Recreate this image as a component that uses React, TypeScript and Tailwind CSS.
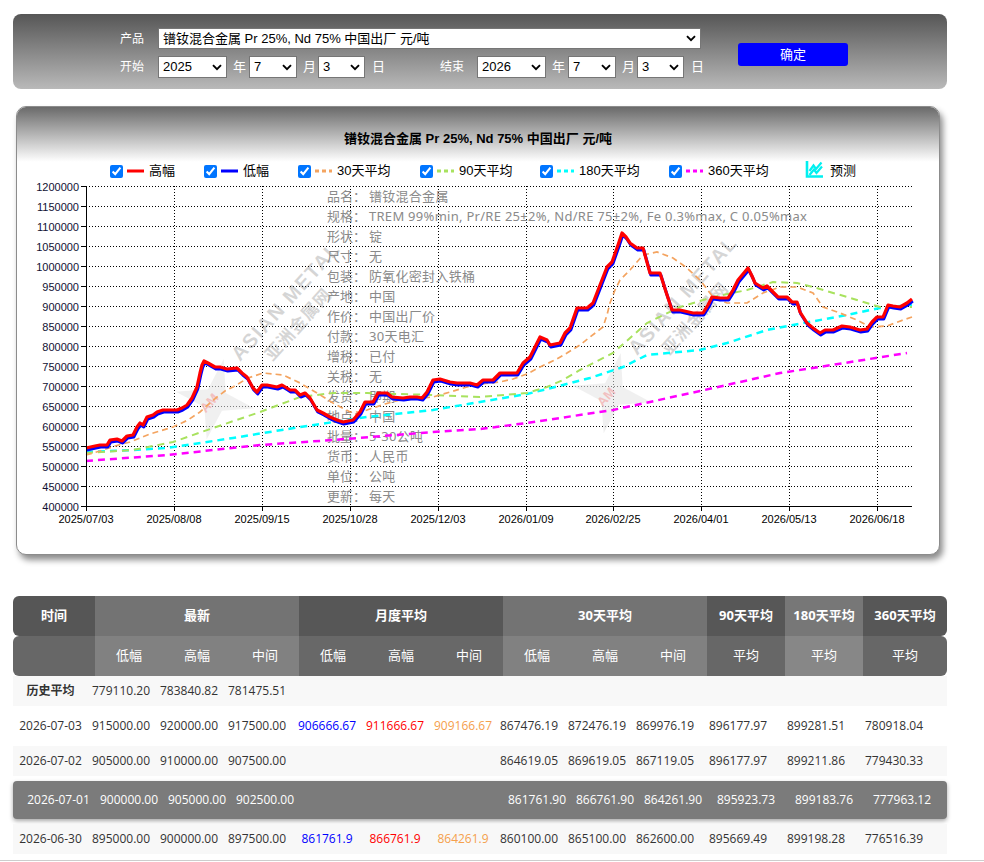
import React from "react";

const HIGH =
  "86,448 95,446 100,445 107,445 110,440 117,439 122,441 127,436 133,435 137,427 140,423 143,425 147,417 153,415 157,412 163,410 177,410 182,408 187,405 192,398 197,387 200,373 202,365 204,361 208,363 215,367 220,367 227,369 237,368 242,373 247,377 253,388 257,392 262,385 267,385 277,387 282,385 287,388 290,390 295,390 300,395 305,393 310,398 317,410 323,413 330,417 337,420 343,422 353,420 360,412 365,402 373,402 378,393 387,393 392,397 403,398 410,397 417,397 422,398 427,392 433,380 440,379 450,382 457,383 470,383 477,385 483,380 493,380 500,373 517,373 523,363 530,357 540,337 547,340 550,345 560,343 565,333 570,328 577,308 587,308 593,303 600,285 607,267 612,262 618,245 622,233 626,237 630,243 637,248 643,248 650,273 660,273 666,292 672,310 680,310 693,313 703,313 708,305 712,297 720,298 728,298 733,290 738,280 748,268 752,276 755,283 763,288 767,286 778,297 787,297 792,302 797,302 800,312 807,323 813,328 820,333 825,330 833,330 842,326 850,327 860,330 867,329 872,322 877,317 883,317 888,305 893,306 900,307 907,303 912,299";

const MA30 =
  "86,455 100,451 115,446 130,442 150,434 173,427 188,420 200,412 210,403 217,397 225,391 233,387 248,378 263,373 283,375 300,383 317,393 333,403 350,412 360,412 367,410 385,404 400,400 433,397 450,392 467,387 480,384 500,382 513,379 527,374 540,367 555,360 567,353 580,345 590,337 603,327 607,315 610,303 615,290 620,280 630,270 643,255 657,252 673,258 687,268 700,280 713,297 727,303 747,303 763,293 780,287 797,287 813,293 823,307 840,313 857,320 870,327 887,326 903,320 912,317";

const MA90 =
  "86,453 133,450 173,442 213,428 260,412 300,397 333,393 367,393 433,395 480,397 527,393 547,387 563,380 580,370 613,353 647,323 680,307 713,297 747,290 773,282 797,283 813,287 847,297 880,307 912,307";

const MA180 =
  "86,452 133,450 167,448 233,438 300,427 367,417 433,410 480,402 527,394 563,385 590,378 623,367 647,355 700,350 727,343 767,330 793,325 847,315 880,308 912,305";

const MA360 =
  "86,461 167,455 260,445 333,440 433,432 480,429 527,423 613,410 700,391 780,373 813,368 907,353";

const Y_LABELS = Array.from({ length: 17 }, (_, i) => ({
  v: String(1200000 - i * 50000),
  y: 186 + i * 20,
}));

const X_LABELS: [string, number][] = [
  ["2025/07/03", 86],
  ["2025/08/08", 174],
  ["2025/09/15", 262],
  ["2025/10/28", 350],
  ["2025/12/03", 438],
  ["2026/01/09", 526],
  ["2026/02/25", 613],
  ["2026/04/01", 701],
  ["2026/05/13", 789],
  ["2026/06/18", 877],
];

const INFO: [string, string][] = [
  ["品名：", "镨钕混合金属"],
  ["规格：", "TREM 99%min, Pr/RE 25±2%, Nd/RE 75±2%, Fe 0.3%max, C 0.05%max"],
  ["形状：", "锭"],
  ["尺寸：", "无"],
  ["包装：", "防氧化密封入铁桶"],
  ["产地：", "中国"],
  ["作价：", "中国出厂价"],
  ["付款：", "30天电汇"],
  ["增税：", "已付"],
  ["关税：", "无"],
  ["发货：", "即期"],
  ["地点：", "中国"],
  ["批量：", "5-30公吨"],
  ["货币：", "人民币"],
  ["单位：", "公吨"],
  ["更新：", "每天"],
];

function Chevron() {
  return (
    <svg width="10" height="7" viewBox="0 0 10 7" className="shrink-0">
      <path d="M1 1.2 L5 5.2 L9 1.2" fill="none" stroke="#000" strokeWidth="1.9" />
    </svg>
  );
}

function Sel({ className, text }: { className: string; text: string }) {
  return (
    <div
      className={
        "flex items-center justify-between bg-white border border-[#767676] pl-[4px] pr-[4px] text-[13px] text-black whitespace-nowrap " +
        className
      }
    >
      <span>{text}</span>
      <Chevron />
    </div>
  );
}

function Watermark({ dx, dy }: { dx: number; dy: number }) {
  return (
    <g transform={`translate(${dx},${dy})`}>
      <g transform="translate(215,400) rotate(12)" opacity="0.55">
        <polygon
          points="0,-42 9,-9 40,0 9,9 0,40 -9,9 -40,0 -9,-9"
          fill="#e4e4e4"
        />
      </g>
      <text
        x="198"
        y="408"
        transform="rotate(-48 208 402)"
        fontFamily="Liberation Sans, Arial, sans-serif"
        fontWeight="bold"
        fontSize="13"
        fill="#f3b5b5"
        opacity="0.8"
      >
        AM
      </text>
      <g transform="translate(240,362) rotate(-48)" opacity="0.16">
        <text
          x="0"
          y="0"
          fontFamily="Liberation Sans, Arial, sans-serif"
          fontWeight="bold"
          fontSize="20"
          letterSpacing="1.5"
          fill="#000"
        >
          ASIAN METAL
        </text>
        <text
          x="22"
          y="24"
          fontFamily="Noto Sans CJK SC, sans-serif"
          fontWeight="bold"
          fontSize="17"
          letterSpacing="1"
          fill="#000"
        >
          亚洲金属网
        </text>
      </g>
    </g>
  );
}

function Chart() {
  return (
    <svg
      width="922"
      height="374"
      viewBox="17 180 922 374"
      className="block"
    >
      {Y_LABELS.slice(0, 16).map((l) => (
        <line
          key={"h" + l.y}
          x1="86"
          x2="912"
          y1={l.y + 0.5}
          y2={l.y + 0.5}
          stroke="#000"
          strokeWidth="1"
          strokeDasharray="1 2"
          shapeRendering="crispEdges"
        />
      ))}
      {X_LABELS.slice(1).map(([, x]) => (
        <line
          key={"v" + x}
          x1={x + 0.5}
          x2={x + 0.5}
          y1="186"
          y2="506"
          stroke="#000"
          strokeWidth="1"
          strokeDasharray="1 2"
          shapeRendering="crispEdges"
        />
      ))}

      <Watermark dx={0} dy={0} />
      <Watermark dx={397} dy={-6} />

      {INFO.map(([k, v], i) => (
        <g key={k + i} fontFamily="Noto Sans, Noto Sans CJK SC, sans-serif" fontSize="13" fill="#8a8a8a">
          <text x="327" y={196 + i * 20} dominantBaseline="central">
            {k}
          </text>
          <text x="369" y={196 + i * 20} dominantBaseline="central" letterSpacing="0.28">
            {v}
          </text>
        </g>
      ))}

      <polyline points={MA360} fill="none" stroke="#ff00ff" strokeWidth="2.5" strokeDasharray="7 5" />
      <polyline points={MA180} fill="none" stroke="#00ffff" strokeWidth="2.5" strokeDasharray="7 5" />
      <polyline points={MA90} fill="none" stroke="#a8e25e" strokeWidth="2" strokeDasharray="7 5" />
      <polyline points={MA30} fill="none" stroke="#f4a460" strokeWidth="1.7" strokeDasharray="6 4" />

      <polyline
        points={HIGH}
        transform="translate(0.8,2)"
        fill="none"
        stroke="#0000ff"
        strokeWidth="3"
        strokeLinejoin="round"
      />
      <polyline points={HIGH} fill="none" stroke="#ff0000" strokeWidth="3.2" strokeLinejoin="round" />

      <line x1="86.5" x2="86.5" y1="186" y2="507" stroke="#000" strokeWidth="1" shapeRendering="crispEdges" />
      <line x1="86" x2="912" y1="506.5" y2="506.5" stroke="#000" strokeWidth="1" shapeRendering="crispEdges" />
      {Y_LABELS.map((l) => (
        <g key={"yl" + l.y}>
          <line x1="81" x2="86" y1={l.y + 0.5} y2={l.y + 0.5} stroke="#000" shapeRendering="crispEdges" />
          <text
            x="79"
            y={l.y + 0.5}
            textAnchor="end"
            dominantBaseline="central"
            fontFamily="Liberation Sans, Arial, sans-serif"
            fontSize="11"
            fill="#111133"
          >
            {l.v}
          </text>
        </g>
      ))}
      {X_LABELS.map(([t, x]) => (
        <g key={"xl" + t}>
          <line x1={x + 0.5} x2={x + 0.5} y1="506" y2="511" stroke="#000" shapeRendering="crispEdges" />
          <text
            x={x}
            y="519"
            textAnchor="middle"
            dominantBaseline="central"
            fontFamily="Liberation Sans, Arial, sans-serif"
            fontSize="11"
            fill="#000"
          >
            {t}
          </text>
        </g>
      ))}
    </svg>
  );
}

function LegendLine({ color, dashed }: { color: string; dashed?: boolean }) {
  return (
    <svg width="17" height="6" viewBox="0 0 17 6" className="shrink-0">
      <line
        x1="0"
        x2="17"
        y1="3"
        y2="3"
        stroke={color}
        strokeWidth="3"
        strokeDasharray={dashed ? "4 3" : undefined}
      />
    </svg>
  );
}

function LegendItem({
  className,
  color,
  dashed,
  label,
}: {
  className: string;
  color: string;
  dashed?: boolean;
  label: string;
}) {
  return (
    <div className={"flex items-center " + className}>
      <input type="checkbox" defaultChecked className="m-0 w-[13px] h-[13px] shrink-0" />
      <span className="ml-[4px] flex items-center">
        <LegendLine color={color} dashed={dashed} />
      </span>
      <span className="ml-[5px] whitespace-nowrap">{label}</span>
    </div>
  );
}

function ForecastIcon() {
  return (
    <svg width="19" height="18" viewBox="0 0 19 18" className="shrink-0">
      <path d="M2 1 V16.5 H18" fill="none" stroke="#00f0f0" strokeWidth="2.6" />
      <path d="M4.5 11 L8.5 5.5 L11 9 L16.5 2.5" fill="none" stroke="#00f0f0" strokeWidth="2.2" />
      <path d="M4.5 15 L9 9.5 L11.5 13 L17 6.5" fill="none" stroke="#00f0f0" strokeWidth="2.2" />
    </svg>
  );
}

const HCOLS =
  "grid grid-cols-[82px_68px_68px_68px_68px_68px_68px_68px_68px_68px_78px_78px_84px]";
const DCOLS =
  "grid grid-cols-[74px_68px_68px_70px_68px_68px_66px_68px_68px_73px_78px_78px_87px]";

type Cell = { t: string; c?: string };

function DataRow({
  date,
  cells,
  bg,
  bold,
}: {
  date: string;
  cells: Cell[];
  bg: string;
  bold?: boolean;
}) {
  return (
    <div className={DCOLS + " h-[30px] items-center text-[12px] text-[#333] " + bg}>
      <div className="pl-[5px]">
        <span className={"inline-block w-[65px] text-center whitespace-nowrap " + (bold ? "font-bold" : "")}>
          {date}
        </span>
      </div>
      {cells.map((cell, i) => (
        <div key={i} className="pl-[5px]">
          <span className={"inline-block w-[58px] text-center whitespace-nowrap " + (cell.c || "")}>
            {cell.t}
          </span>
        </div>
      ))}
    </div>
  );
}

const E: Cell = { t: "" };
const B = "text-[#0000ff]";
const R = "text-[#ff0000]";
const O = "text-[#f5a04c]";

export default function App() {
  return (
    <div className="w-[984px] min-h-[862px] bg-white font-['Liberation_Sans','Noto_Sans_CJK_SC',sans-serif] text-black">
      <div className="ml-[13px] pt-[14px]">
        <div className="w-[934px] h-[75px] rounded-[8px] bg-[linear-gradient(to_bottom,#565656,#b9b9b9)] flex items-start">
          <div className="pl-[107px] pt-[14px] flex flex-col">
            <div className="flex items-center h-[21px]">
              <span className="w-[24px] text-[12px] text-white whitespace-nowrap">产品</span>
              <Sel className="ml-[14px] w-[543px] h-[21px]" text="镨钕混合金属 Pr 25%, Nd 75% 中国出厂 元/吨" />
            </div>
            <div className="flex items-center h-[22px] mt-[7px] text-[13px] text-white">
              <span className="w-[24px] text-[12px] whitespace-nowrap">开始</span>
              <Sel className="ml-[14px] w-[69px] h-[22px]" text="2025" />
              <span className="ml-[6px] mr-[3px]">年</span>
              <Sel className="w-[48px] h-[22px]" text="7" />
              <span className="ml-[6px] mr-[2px]">月</span>
              <Sel className="w-[47px] h-[22px]" text="3" />
              <span className="ml-[7px]">日</span>
              <span className="ml-[55px] w-[24px] text-[12px] whitespace-nowrap">结束</span>
              <Sel className="ml-[13px] w-[69px] h-[22px]" text="2026" />
              <span className="ml-[6px] mr-[3px]">年</span>
              <Sel className="w-[48px] h-[22px]" text="7" />
              <span className="ml-[6px] mr-[2px]">月</span>
              <Sel className="w-[47px] h-[22px]" text="3" />
              <span className="ml-[7px]">日</span>
            </div>
          </div>
          <div className="ml-[34px] mt-[29px] w-[110px] h-[23px] rounded-[3px] bg-[#0000ff] text-white text-[13px] flex items-center justify-center">
            确定
          </div>
        </div>
      </div>

      <div className="ml-[16px] mt-[17px] w-[924px] h-[449px] rounded-[10px] border border-[#8c8c8c] bg-white shadow-[3px_5px_6px_rgba(0,0,0,0.45)] overflow-hidden">
        <div className="h-[73px] bg-[linear-gradient(to_bottom,#6a6a6a_0%,#ffffff_75%)] flex flex-col pt-[24px]">
          <div className="h-[16px] leading-[16px] text-[13px] font-bold text-center">
            镨钕混合金属 Pr 25%, Nd 75% 中国出厂 元/吨
          </div>
          <div className="mt-[16px] h-[16px] flex items-center pl-[93px] text-[13px]">
            <LegendItem className="w-[94px]" color="#ff0000" label="高幅" />
            <LegendItem className="w-[94px]" color="#0000ff" label="低幅" />
            <LegendItem className="w-[122px]" color="#f4a460" dashed label="30天平均" />
            <LegendItem className="w-[120px]" color="#a8e25e" dashed label="90天平均" />
            <LegendItem className="w-[129px]" color="#00ffff" dashed label="180天平均" />
            <LegendItem className="w-[136px]" color="#ff00ff" dashed label="360天平均" />
            <div className="flex items-center -mt-[4px]">
              <ForecastIcon />
              <span className="ml-[6px] mt-[4px]">预测</span>
            </div>
          </div>
        </div>
        <Chart />
      </div>

      <div className="ml-[13px] mt-[41px] w-[934px] font-['Open_Sans','Noto_Sans_CJK_SC',sans-serif]">
        <div className={HCOLS + " h-[40px] text-white text-[13px] font-bold"}>
          <div className="bg-[#565656] rounded-l-[6px] flex items-center justify-center">时间</div>
          <div className="col-span-3 bg-[#737373] flex items-center justify-center">最新</div>
          <div className="col-span-3 bg-[#575757] flex items-center justify-center">月度平均</div>
          <div className="col-span-3 bg-[#737373] flex items-center justify-center">30天平均</div>
          <div className="bg-[#575757] flex items-center justify-center">90天平均</div>
          <div className="bg-[#777777] flex items-center justify-center">180天平均</div>
          <div className="bg-[#575757] rounded-r-[6px] flex items-center justify-center">360天平均</div>
        </div>
        <div className={HCOLS + " h-[40px] text-white text-[13px]"}>
          <div className="bg-[#676767] rounded-l-[6px]"></div>
          <div className="bg-[#818181] flex items-center justify-center">低幅</div>
          <div className="bg-[#818181] flex items-center justify-center">高幅</div>
          <div className="bg-[#818181] flex items-center justify-center">中间</div>
          <div className="bg-[#686868] flex items-center justify-center">低幅</div>
          <div className="bg-[#686868] flex items-center justify-center">高幅</div>
          <div className="bg-[#686868] flex items-center justify-center">中间</div>
          <div className="bg-[#818181] flex items-center justify-center">低幅</div>
          <div className="bg-[#818181] flex items-center justify-center">高幅</div>
          <div className="bg-[#818181] flex items-center justify-center">中间</div>
          <div className="bg-[#676767] flex items-center justify-center">平均</div>
          <div className="bg-[#878787] flex items-center justify-center">平均</div>
          <div className="bg-[#676767] rounded-r-[6px] flex items-center justify-center">平均</div>
        </div>

        <DataRow
          date="历史平均"
          bold
          bg="bg-[#f8f8f8]"
          cells={[
            { t: "779110.20" },
            { t: "783840.82" },
            { t: "781475.51" },
            E, E, E, E, E, E, E, E, E,
          ]}
        />
        <div className="mt-[5px]">
          <DataRow
            date="2026-07-03"
            bg="bg-white"
            cells={[
              { t: "915000.00" },
              { t: "920000.00" },
              { t: "917500.00" },
              { t: "906666.67", c: B },
              { t: "911666.67", c: R },
              { t: "909166.67", c: O },
              { t: "867476.19" },
              { t: "872476.19" },
              { t: "869976.19" },
              { t: "896177.97" },
              { t: "899281.51" },
              { t: "780918.04" },
            ]}
          />
        </div>
        <div className="mt-[5px]">
          <DataRow
            date="2026-07-02"
            bg="bg-[#f8f8f8]"
            cells={[
              { t: "905000.00" },
              { t: "910000.00" },
              { t: "907500.00" },
              E, E, E,
              { t: "864619.05" },
              { t: "869619.05" },
              { t: "867119.05" },
              { t: "896177.97" },
              { t: "899211.86" },
              { t: "779430.33" },
            ]}
          />
        </div>
        <div className="mt-[5px] h-[38px] rounded-[4px] bg-[#7b7b7b] shadow-[0_2px_4px_rgba(0,0,0,0.35)] pl-[8px] flex items-center overflow-hidden">
          <div className={DCOLS + " w-full items-center text-[12px] text-white"}>
            <div className="pl-[5px]">
              <span className="inline-block w-[65px] text-center whitespace-nowrap">2026-07-01</span>
            </div>
            {[
              "900000.00", "905000.00", "902500.00", "", "", "",
              "861761.90", "866761.90", "864261.90", "895923.73", "899183.76", "777963.12",
            ].map((t, i) => (
              <div key={i} className="pl-[5px]">
                <span className="inline-block w-[58px] text-center whitespace-nowrap">{t}</span>
              </div>
            ))}
          </div>
        </div>
        <div className="mt-[5px]">
          <DataRow
            date="2026-06-30"
            bg="bg-[#f8f8f8]"
            cells={[
              { t: "895000.00" },
              { t: "900000.00" },
              { t: "897500.00" },
              { t: "861761.9", c: B },
              { t: "866761.9", c: R },
              { t: "864261.9", c: O },
              { t: "860100.00" },
              { t: "865100.00" },
              { t: "862600.00" },
              { t: "895669.49" },
              { t: "899198.28" },
              { t: "776516.39" },
            ]}
          />
        </div>
      </div>
      <div className="mt-[6px] w-[984px] h-px bg-[#cdcdcd]"></div>
    </div>
  );
}
